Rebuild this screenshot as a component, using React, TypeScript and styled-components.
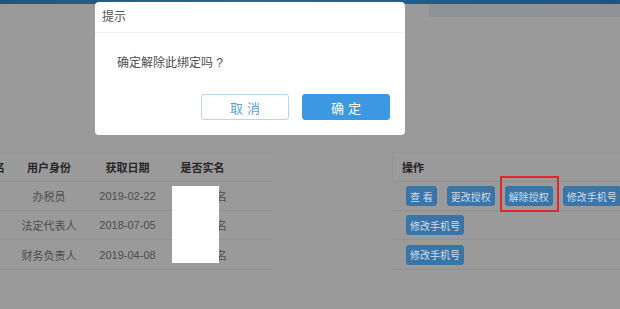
import styled, { createGlobalStyle } from "styled-components";

const GlobalStyle = createGlobalStyle`
  html, body {
    margin: 0;
    padding: 0;
    background: #9a9a9a;
  }
  body {
    font-family: "Liberation Sans", "Noto Sans CJK SC", sans-serif;
  }
`;

const Page = styled.div`
  position: relative;
  width: 620px;
  height: 309px;
  overflow: hidden;
  background: #9a9a9a;
`;

const TopBar = styled.div`
  height: 4px;
  background: linear-gradient(90deg, #1c5684, #2a6598 40%, #1f5b8d 70%, #1a5586);
`;

const SubBar = styled.div`
  display: flex;
  height: 13px;
`;

const SubBarSpacer = styled.div`
  flex: 0 0 429px;
`;

const SubBarBand = styled.div`
  flex: 1;
  background: #8f9397;
`;

const TableWrap = styled.div`
  position: relative;
  margin-top: 135px;
`;

const Row = styled.div<{ $height: number }>`
  display: grid;
  grid-template-columns: 8px 82px 75px 75px 32px 120px 1fr;
  height: ${({ $height }) => $height}px;
`;

const Cell = styled.div<{ $head?: boolean; $line?: boolean; $align?: string }>`
  display: flex;
  align-items: center;
  justify-content: ${({ $align }) => $align || "center"};
  overflow: hidden;
  white-space: nowrap;
  font-size: 11px;
  font-weight: ${({ $head }) => ($head ? 700 : 400)};
  color: ${({ $head }) => ($head ? "#262626" : "#4d4d4d")};
  border-bottom: 1px solid ${({ $line }) => ($line ? "#909090" : "transparent")};
  border-top: ${({ $head, $line }) =>
    $head && $line ? "1px solid #959595" : "0"};
  box-sizing: border-box;
`;

const ClippedText = styled.span`
  margin-left: -6px;
`;

const NameText = styled.span`
  margin-left: 29px;
`;

const ActionCell = styled(Cell)`
  justify-content: flex-start;
  padding-left: ${({ $head }) => ($head ? 9 : 14)}px;
  gap: 10px;
  border-left: ${({ $head }) => ($head ? "1px solid #959595" : "0")};
  overflow: visible;
`;

const ActionButton = styled.button`
  height: 20px;
  padding: 0 4px;
  border: none;
  border-radius: 3px;
  background: #3a75aa;
  color: #d3dde8;
  font-family: "Liberation Sans", "Noto Sans CJK SC", sans-serif;
  font-size: 10px;
  white-space: nowrap;
  flex-shrink: 0;
`;

const Highlight = styled.span`
  position: relative;
  display: inline-flex;

  &::after {
    content: "";
    position: absolute;
    top: -10px;
    left: -5px;
    right: -6px;
    bottom: -6px;
    border: 2px solid #e3252c;
  }
`;

const Redaction = styled.div`
  position: absolute;
  left: 172px;
  top: 34px;
  width: 47px;
  height: 77px;
  background: #ffffff;
`;

const Dialog = styled.div`
  position: absolute;
  left: 95px;
  top: 2px;
  width: 310px;
  height: 133px;
  background: #ffffff;
  border-radius: 4px;
  display: flex;
  flex-direction: column;
`;

const DialogTitle = styled.div`
  height: 30px;
  line-height: 30px;
  padding-left: 7px;
  border-bottom: 1px solid #f0f0f0;
  font-size: 12px;
  color: #555;
`;

const DialogMessage = styled.div`
  padding: 21px 0 0 22px;
  height: 18px;
  line-height: 18px;
  font-size: 12px;
  color: #4d4d4d;
`;

const DialogFooter = styled.div`
  display: flex;
  justify-content: flex-end;
  gap: 13px;
  padding: 22px 15px 0 0;
`;

const DialogButton = styled.button<{ $primary?: boolean }>`
  width: 88px;
  height: 26px;
  border-radius: 3px;
  border: 1px solid ${({ $primary }) => ($primary ? "#3e97e1" : "#b3d6f2")};
  background: ${({ $primary }) => ($primary ? "#3e97e1" : "#ffffff")};
  color: ${({ $primary }) => ($primary ? "#ffffff" : "#5aa3e2")};
  font-family: "Liberation Sans", "Noto Sans CJK SC", sans-serif;
  font-size: 13px;
  letter-spacing: 4px;
  text-indent: 4px;
  padding: 0;
`;

const rows = [
  { role: "办税员", date: "2019-02-22", height: 29, full: true },
  { role: "法定代表人", date: "2018-07-05", height: 29, full: false },
  { role: "财务负责人", date: "2019-04-08", height: 30, full: false },
];

export default function App() {
  return (
    <Page>
      <GlobalStyle />
      <TopBar />
      <SubBar>
        <SubBarSpacer />
        <SubBarBand />
      </SubBar>

      <TableWrap>
        <Row $height={30}>
          <Cell $head $line $align="flex-start">
            <ClippedText>名</ClippedText>
          </Cell>
          <Cell $head $line>用户身份</Cell>
          <Cell $head $line>获取日期</Cell>
          <Cell $head $line>是否实名</Cell>
          <Cell $head $line />
          <Cell />
          <ActionCell $head $line>操作</ActionCell>
        </Row>
        {rows.map((r) => (
          <Row key={r.date} $height={r.height}>
            <Cell $line />
            <Cell $line>{r.role}</Cell>
            <Cell $line>{r.date}</Cell>
            <Cell $line $align="flex-start">
              <NameText>已实名</NameText>
            </Cell>
            <Cell $line />
            <Cell />
            <ActionCell $line>
              {r.full ? (
                <>
                  <ActionButton>查 看</ActionButton>
                  <ActionButton>更改授权</ActionButton>
                  <Highlight>
                    <ActionButton>解除授权</ActionButton>
                  </Highlight>
                  <ActionButton>修改手机号</ActionButton>
                </>
              ) : (
                <ActionButton>修改手机号</ActionButton>
              )}
            </ActionCell>
          </Row>
        ))}
        <Redaction />
      </TableWrap>

      <Dialog>
        <DialogTitle>提示</DialogTitle>
        <DialogMessage>确定解除此绑定吗 ?</DialogMessage>
        <DialogFooter>
          <DialogButton>取消</DialogButton>
          <DialogButton $primary>确定</DialogButton>
        </DialogFooter>
      </Dialog>
    </Page>
  );
}
